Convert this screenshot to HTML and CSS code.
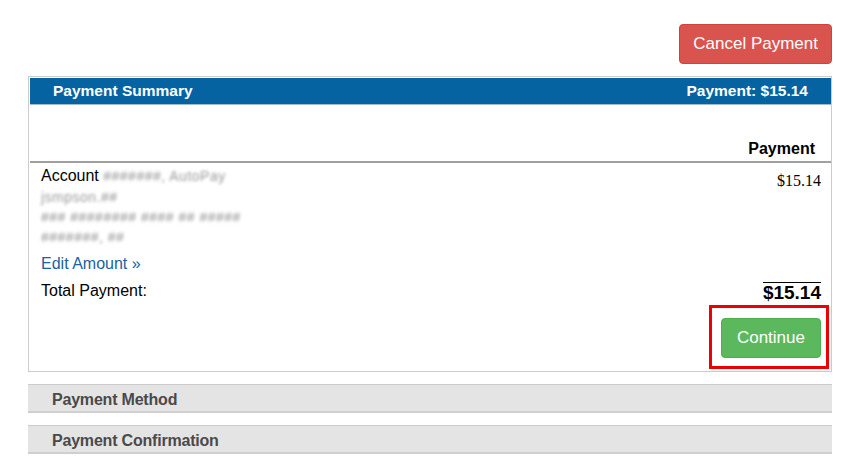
FILE: index.html
```html
<!DOCTYPE html>
<html lang="en">
<head>
    <meta charset="UTF-8">
    <meta name="viewport" content="width=device-width, initial-scale=1.0">
    <title>Make a Payment</title>
    <link rel="stylesheet" href="styles.css">
</head>
<body>

    <div class="page">
        <!-- Top actions -->
        <div class="actions">
            <button class="btn btn-cancel">Cancel Payment</button>
        </div>

        <!-- Step 1: Summary -->
        <div class="panel">
            <div class="panel-head">
                <span>Payment Summary</span>
                <span>Payment: $15.14</span>
            </div>
            <div class="col-head">Payment</div>

            <div class="account-row">
                <div class="account">
                    <div class="account-name">Account <span class="blur">#######, AutoPay</span></div>
                    <div class="blur">jsmpson.##</div>
                    <div class="blur">### ######## #### ## #####</div>
                    <div class="blur">#######, ##</div>
                </div>
                <div class="amount">$15.14</div>
            </div>

            <a href="#" class="edit-link">Edit Amount &raquo;</a>

            <div class="total-row">
                <span>Total Payment:</span>
                <span class="total">$15.14</span>
            </div>

            <div class="continue-row">
                <div class="highlight">
                    <button class="btn btn-continue">Continue</button>
                </div>
            </div>
        </div>

        <!-- Collapsed steps -->
        <div class="step">Payment Method</div>
        <div class="step">Payment Confirmation</div>
    </div>

</body>
</html>
```

FILE: styles.css
```css
body {
    margin: 0;
    padding: 0;
    font-family: "Liberation Sans", Arial, sans-serif;
    color: #000;
    background: #fff;
}
.page {
    width: 804px;
    margin-left: 28px;
    padding-top: 24px;
}
.actions {
    display: flex;
    justify-content: flex-end;
    margin-bottom: 12px;
}
.btn {
    font-family: "Liberation Sans", Arial, sans-serif;
    font-size: 17px;
    color: #fff;
    border-radius: 4px;
    cursor: pointer;
}
.btn-cancel {
    background: #d9534f;
    border: 1px solid #d43f3a;
    height: 40px;
    padding: 0 13px;
}
.panel {
    border: 1px solid #cccccc;
    padding: 1px 0 0 1px;
}
.panel-head {
    background: #0563a1;
    color: #fff;
    font-weight: bold;
    font-size: 15.5px;
    display: flex;
    justify-content: space-between;
    padding: 4px 23px 5px 23px;
    height: 17px;
    line-height: 17px;
    border-bottom: 1px solid #a7b9cc;
}
.col-head {
    text-align: right;
    font-weight: bold;
    font-size: 16px;
    padding: 35px 16px 3px 0;
    border-bottom: 2px solid #a0a0a0;
}
.account-row {
    display: flex;
    justify-content: space-between;
    padding: 2px 10px 0 11px;
}
.account {
    line-height: 20px;
}
.account-name {
    font-size: 16px;
    color: #000;
    line-height: 22px;
}
.blur {
    color: #999;
    filter: blur(1.4px);
    font-size: 14px;
    letter-spacing: 0.5px;
}
.amount {
    font-family: "Liberation Serif", "Times New Roman", serif;
    font-size: 16px;
    padding-top: 7px;
}
.edit-link {
    display: block;
    color: #1a62a3;
    text-decoration: none;
    font-size: 16px;
    margin: 8px 0 0 11px;
}
.total-row {
    display: flex;
    justify-content: space-between;
    align-items: flex-end;
    font-size: 16px;
    padding: 0 10px 0 11px;
    margin-top: 9px;
}
.total-row span:first-child {
    padding-bottom: 3px;
}
.total {
    font-size: 19px;
    font-weight: bold;
    border-top: 1px solid #000;
    padding-top: 0;
    line-height: 20px;
}
.continue-row {
    display: flex;
    justify-content: flex-end;
    padding: 2px 2px 2px 0;
}
.highlight {
    border: 3px solid #ee0000;
    padding: 10px 5px 8px 9px;
}
.btn-continue {
    background: #5cb85c;
    border: 1px solid #4cae4c;
    height: 40px;
    padding: 0 15px;
    display: block;
}
.step {
    background: #e5e4e4;
    border-top: 1px solid #cccccc;
    border-bottom: 2px solid #cfcfcf;
    color: #4a4a4a;
    font-weight: bold;
    font-size: 16px;
    letter-spacing: -0.2px;
    height: 26px;
    line-height: 29px;
    padding-left: 24px;
    margin-top: 12px;
}
```
